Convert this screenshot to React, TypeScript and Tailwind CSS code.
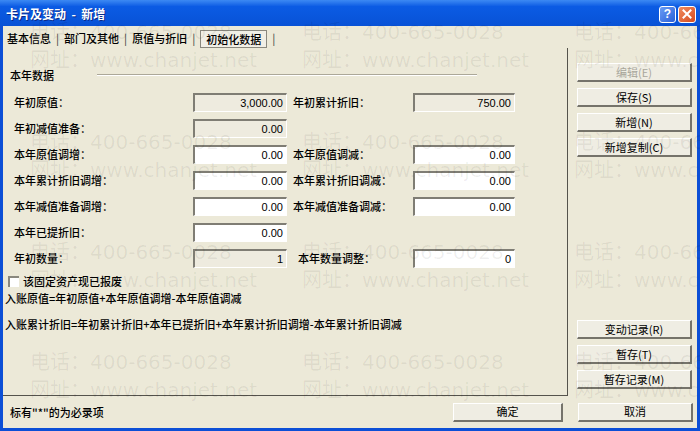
import React from "react";

const CJK = "font-['Noto_Sans_CJK_SC',sans-serif]";

type FieldRow = {
  left: string;
  leftValue: string;
  leftEditable: boolean;
  right?: string;
  rightValue?: string;
  rightEditable?: boolean;
};

const rows: FieldRow[] = [
  { left: "年初原值：", leftValue: "3,000.00", leftEditable: false, right: "年初累计折旧：", rightValue: "750.00", rightEditable: false },
  { left: "年初减值准备：", leftValue: "0.00", leftEditable: false },
  { left: "本年原值调增：", leftValue: "0.00", leftEditable: true, right: "本年原值调减：", rightValue: "0.00", rightEditable: true },
  { left: "本年累计折旧调增：", leftValue: "0.00", leftEditable: true, right: "本年累计折旧调减：", rightValue: "0.00", rightEditable: true },
  { left: "本年减值准备调增：", leftValue: "0.00", leftEditable: true, right: "本年减值准备调减：", rightValue: "0.00", rightEditable: true },
  { left: "本年已提折旧：", leftValue: "0.00", leftEditable: true },
  { left: "年初数量：", leftValue: "1", leftEditable: false, right: "本年数量调整：", rightValue: "0", rightEditable: true },
];

function ValueBox({ value, editable, width }: { value: string; editable: boolean; width: string }) {
  return (
    <div
      className={`${width} h-[19px] flex items-center justify-end pr-[3px] border-t-2 border-l-2 border-t-[#7f7d74] border-l-[#7f7d74] border-b border-r border-b-white border-r-white font-['Liberation_Sans',sans-serif] text-[11px] text-black ${
        editable ? "bg-white" : "bg-[#eeebdf]"
      }`}
    >
      {value}
    </div>
  );
}

function Btn({ label, disabled, width = "w-[115px]" }: { label: string; disabled?: boolean; width?: string }) {
  return (
    <div
      className={`${width} h-[19px] flex items-center justify-center bg-[#efede3] border-t border-l border-t-white border-l-white border-r-2 border-b-2 border-r-[#75736a] border-b-[#75736a] text-[11px] ${
        disabled ? "text-[#a9a79c]" : "text-black"
      }`}
    >
      {label}
    </div>
  );
}

function Watermark() {
  const cells = [0, 1, 2];
  const blocks = [0, 1, 2, 3];
  return (
    <div className="pointer-events-none absolute inset-0 overflow-hidden pl-[30px] pt-[18px] flex flex-col font-['DejaVu_Sans','Noto_Sans_CJK_SC',sans-serif] text-[20px] leading-[28px] text-[rgba(0,0,0,0.065)]">
      {blocks.map((b) => (
        <div key={b} className="h-[110px] flex flex-col shrink-0">
          <div className="flex">
            {cells.map((c) => (
              <div key={c} className="w-[272px] shrink-0 whitespace-nowrap">
                电话：400-665-0028
              </div>
            ))}
          </div>
          <div className="flex">
            {cells.map((c) => (
              <div key={c} className="w-[272px] shrink-0 whitespace-nowrap">
                网址：www.chanjet.net
              </div>
            ))}
          </div>
        </div>
      ))}
    </div>
  );
}

export default function App() {
  return (
    <div className={`relative w-[700px] h-[431px] overflow-hidden flex flex-col bg-[#ece9d8] ${CJK} text-[11px] text-black`}>
      {/* title bar */}
      <div className="h-[26px] shrink-0 flex items-center justify-between pl-[6px] pr-[4px] pt-[2px] bg-gradient-to-b from-[#3c89f3] via-[#0b5be4] via-25% to-[#0852d6]">
        <span className="whitespace-pre text-white font-bold text-[12px] [text-shadow:1px_1px_0_#0a2a8a]">卡片及变动  -  新增</span>
        <div className="flex gap-[2px]">
          <div className="w-[17px] h-[17px] rounded-[3px] border border-white bg-gradient-to-br from-[#6a9cf5] to-[#2a5fd8] flex items-center justify-center text-white font-bold text-[12px] leading-none font-['Liberation_Sans',sans-serif]">
            ?
          </div>
          <div className="w-[18px] h-[17px] rounded-[3px] border border-white bg-gradient-to-br from-[#f08a5c] to-[#d44a1e] flex items-center justify-center">
            <svg width="10" height="10" viewBox="0 0 10 10">
              <path d="M1.5 1.5 L8.5 8.5 M8.5 1.5 L1.5 8.5" stroke="white" strokeWidth="2" strokeLinecap="square" />
            </svg>
          </div>
        </div>
      </div>

      {/* body */}
      <div className="flex-1 flex flex-col border-l-[3px] border-r-[3px] border-b-[3px] border-[#0c4fd6]">
        <div className="h-[370px] flex">
          {/* left: tabs + panel */}
          <div className="w-[565px] flex flex-col">
            <div className="h-[22px] flex items-end pl-[4px] gap-[5px] text-[11px] font-medium">
              <span className="pb-[2px]">基本信息</span>
              <span className="pb-[2px] text-[#555]">|</span>
              <span className="pb-[2px]">部门及其他</span>
              <span className="pb-[2px] text-[#555]">|</span>
              <span className="pb-[2px]">原值与折旧</span>
              <span className="pb-[2px] text-[#555]">|</span>
              <span className="h-[18px] px-[5px] flex items-center border border-[#8a887e] bg-[#f1efe6]">初始化数据</span>
              <span className="pb-[2px] text-[#555]">|</span>
            </div>

            <div className="flex-1 flex flex-col border-r border-b border-[#55534c] font-medium">
              <div className="mt-[20px] h-[14px] flex items-center pl-[7px]">
                <span className="w-[87px]">本年数据</span>
                <div className="w-[380px] h-[2px] border-t border-b border-t-[#aca899] border-b-white" />
              </div>

              <div className="mt-[11px] flex flex-col gap-[7px]">
                {rows.map((r) => (
                  <div key={r.left} className="h-[19px] flex items-center">
                    <span className="w-[190px] pl-[11px]">{r.left}</span>
                    <ValueBox value={r.leftValue} editable={r.leftEditable} width="w-[94px]" />
                    {r.right && (
                      <>
                        <span className={`w-[126px] ${r.left === "年初数量：" ? "pl-[11px]" : "pl-[6px]"}`}>{r.right}</span>
                        <ValueBox value={r.rightValue ?? ""} editable={!!r.rightEditable} width="w-[102px]" />
                      </>
                    )}
                  </div>
                ))}
              </div>

              <div className="mt-[6px] h-[14px] flex items-center pl-[5px] gap-[4px]">
                <div className="w-[11px] h-[11px] bg-white border-t-2 border-l-2 border-t-[#8a887e] border-l-[#8a887e]" />
                <span>该固定资产现已报废</span>
              </div>
              <div className="mt-[3px] h-[14px] flex items-center pl-[2px]">
                入账原值=年初原值+本年原值调增-本年原值调减
              </div>
              <div className="mt-[12px] h-[14px] flex items-center pl-[2px]">
                入账累计折旧=年初累计折旧+本年已提折旧+本年累计折旧调增-本年累计折旧调减
              </div>
            </div>
          </div>

          {/* right buttons */}
          <div className="flex-1 flex flex-col pl-[9px] pt-[37px] pb-[7px]">
            <div className="flex flex-col gap-[6px]">
              <Btn label="编辑(E)" disabled />
              <Btn label="保存(S)" />
              <Btn label="新增(N)" />
              <Btn label="新增复制(C)" />
            </div>
            <div className="mt-auto flex flex-col gap-[6px]">
              <Btn label="变动记录(R)" />
              <Btn label="暂存(T)" />
              <Btn label="暂存记录(M)" />
            </div>
          </div>
        </div>

        {/* bottom row */}
        <div className="flex-1 flex items-center">
          <span className="w-[450px] pl-[7px] font-medium">标有"*"的为必录项</span>
          <Btn label="确定" width="w-[110px]" />
          <div className="w-[15px]" />
          <Btn label="取消" width="w-[115px]" />
        </div>
      </div>

      <Watermark />
    </div>
  );
}
